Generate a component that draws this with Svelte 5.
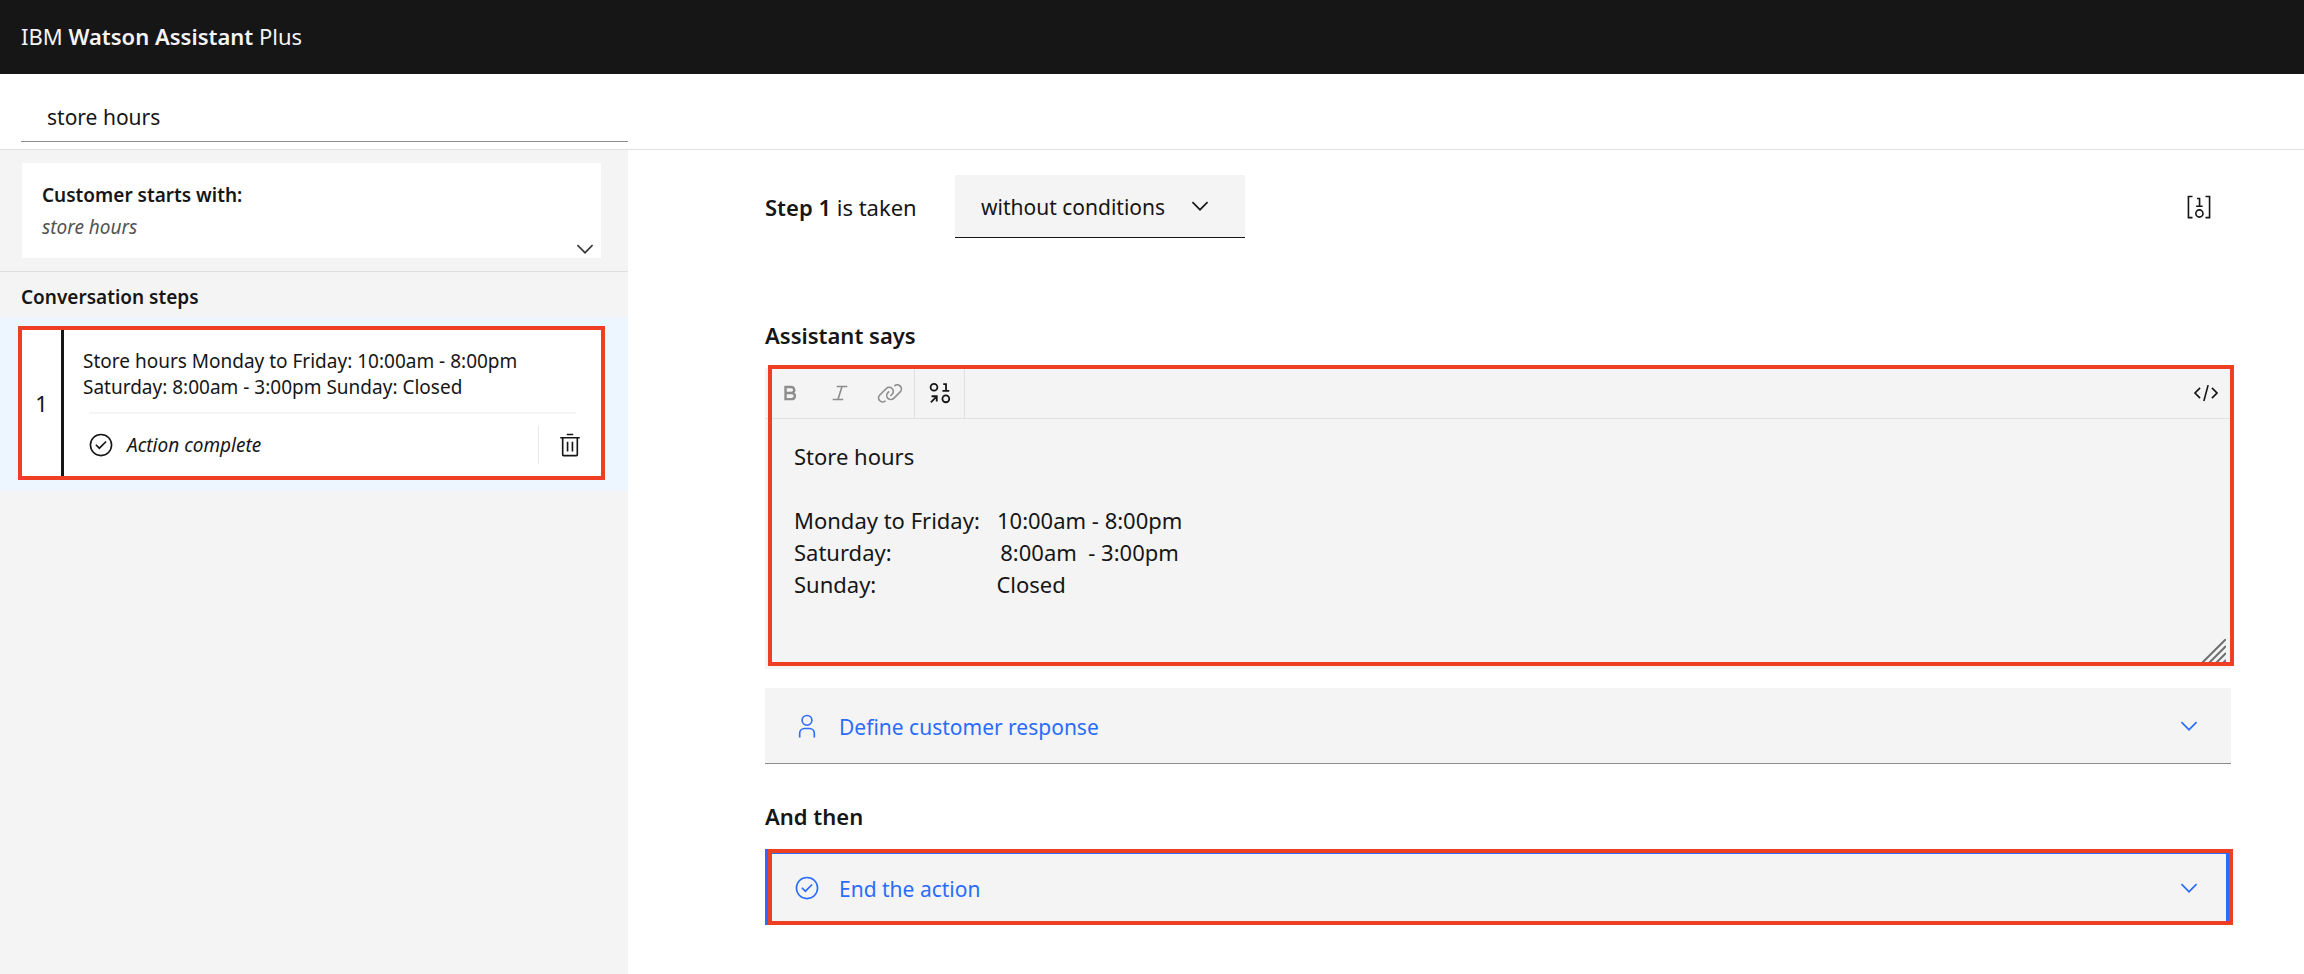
<script>
  const icons = {
    bold: 'M18.25 25H9V7h8.5a5.25 5.25 0 0 1 4 8.65A5.25 5.25 0 0 1 18.25 25ZM12 22h6.23a2.25 2.25 0 1 0 0-4.5H12Zm0-7.5h5.5a2.25 2.25 0 1 0 0-4.5H12Z',
    italic: 'M25 9V7H12v2h5.14l-4.37 14H7v2h13v-2h-5.14l4.37-14Z',
    link: 'M29.25 6.76a6 6 0 0 0-8.5 0l1.42 1.42a4 4 0 1 1 5.67 5.67l-8 8a4 4 0 1 1-5.67-5.66l1.41-1.42-1.41-1.42-1.42 1.42a6 6 0 0 0 0 8.5A6 6 0 0 0 17 25a6 6 0 0 0 4.27-1.76l8-8a6 6 0 0 0-.02-8.48ZM4.19 24.82a4 4 0 0 1 0-5.67l8-8a4 4 0 0 1 5.67 0A3.94 3.94 0 0 1 19 14a4 4 0 0 1-1.17 2.85L15.71 19l1.42 1.42 2.12-2.12a6 6 0 0 0-8.51-8.51l-8 8a6 6 0 0 0 0 8.51A6 6 0 0 0 7 28a6.07 6.07 0 0 0 4.28-1.76l-1.42-1.42a4 4 0 0 1-5.67 0Z',
    code: 'M31 16l-7 7-1.41-1.41L28.17 16l-5.58-5.59L24 9ZM1 16l7-7 1.41 1.41L3.83 16l5.58 5.59L8 23ZM12.42 25.48 17.64 6l1.93.52L14.35 26Z',
    trash: 'M12 12h2v12h-2ZM18 12h2v12h-2ZM4 6v2h2v20a2 2 0 0 0 2 2h16a2 2 0 0 0 2-2V8h2V6ZM8 28V8h16v20ZM12 2h8v2h-8Z',
    check: 'M14 21.41l-5-5L10.41 15 14 18.59 21.59 11 23 12.41ZM16 2a14 14 0 1 0 14 14A14 14 0 0 0 16 2Zm0 26a12 12 0 1 1 12-12 12 12 0 0 1-12 12Z',
    user: 'M16 4a5 5 0 1 1-5 5 5 5 0 0 1 5-5m0-2a7 7 0 1 0 7 7 7 7 0 0 0-7-7ZM26 30h-2v-5a5 5 0 0 0-5-5h-6a5 5 0 0 0-5 5v5H6v-5a7 7 0 0 1 7-7h6a7 7 0 0 1 7 7Z',
    chevron: 'M16 22 6 12l1.4-1.4 8.6 8.6 8.6-8.6L26 12Z'
  };

  const sp = (n) => '\u00a0'.repeat(n);

  let actionName = $state('store hours');
  let condition = $state('without conditions');
  let response = $state(
    [
      'Store hours',
      '',
      `Monday to Friday:${sp(3)}10:00am - 8:00pm`,
      `Saturday:${sp(19)}8:00am${sp(2)}- 3:00pm`,
      `Sunday:${sp(21)}Closed`
    ].join('\n')
  );
</script>

{#snippet icon(name)}
  <svg class="icon" viewBox="0 0 32 32" aria-hidden="true"><path fill-rule="evenodd" d={icons[name]} /></svg>
{/snippet}

<div class="app">
  <header class="brand">
    <span>IBM <strong>Watson Assistant</strong> Plus</span>
  </header>

  <div class="titlebar">
    <input class="name" type="text" aria-label="Action name" bind:value={actionName} />
  </div>

  <div class="body">
    <aside class="sidebar">
      <section class="starts">
        <div class="card">
          <h2>Customer starts with:</h2>
          <p>store hours</p>
          <button class="expand" aria-label="Show phrases">{@render icon('chevron')}</button>
        </div>
      </section>
      <h2 class="steps-title">Conversation steps</h2>
      <div class="selected">
        <article class="step">
          <div class="number">1</div>
          <div class="detail">
            <p class="summary">Store hours Monday to Friday: 10:00am - 8:00pm Saturday: 8:00am - 3:00pm Sunday: Closed</p>
            <div class="status">
              {@render icon('check')}
              <em>Action complete</em>
              <button class="delete" aria-label="Delete step">{@render icon('trash')}</button>
            </div>
          </div>
        </article>
      </div>
    </aside>

    <main class="main">
      <div class="condition">
        <label for="condition"><strong>Step 1</strong> is taken</label>
        <div class="select">
          <select id="condition" bind:value={condition}>
            <option>without conditions</option>
            <option>with conditions</option>
          </select>
          {@render icon('chevron')}
        </div>
        <button class="variables" aria-label="Set variable values">
          <svg class="icon" viewBox="0 0 32 32" aria-hidden="true">
            <g fill="none" stroke="currentColor" stroke-width="2">
              <path d="M8 3H3v26h5M24 3h5v26h-5" />
              <path d="M12.5 15h8M16.7 15V5.6h-3.2" />
              <circle cx="16.5" cy="24" r="4.4" />
            </g>
          </svg>
        </button>
      </div>

      <label class="heading says" for="response">Assistant says</label>
      <div class="editor">
        <div class="toolbar">
          <button class="tool" disabled aria-label="Bold">{@render icon('bold')}</button>
          <button class="tool" disabled aria-label="Italic">{@render icon('italic')}</button>
          <button class="tool" disabled aria-label="Link">{@render icon('link')}</button>
          <button class="tool insert" aria-label="Insert variable">
            <svg class="icon" viewBox="0 0 32 32" aria-hidden="true">
              <g fill="none" stroke="currentColor" stroke-width="2.2">
                <circle cx="8.6" cy="9" r="4.2" />
                <circle cx="23.2" cy="23.2" r="4.2" />
                <path d="M19 13.4h8.4M23.4 13.4V5h-3.4" />
                <path d="M4.8 27.4 12 20.2M5.6 20H12v6.6" />
              </g>
            </svg>
          </button>
          <button class="tool code" aria-label="Show source">{@render icon('code')}</button>
        </div>
        <textarea id="response" spellcheck="false" bind:value={response}></textarea>
        <svg class="grip" viewBox="0 0 24 24" aria-hidden="true">
          <path d="M0 24 24 0M7 24 24 7M14 24 24 14M21 24 24 21" />
        </svg>
        <div class="highlight"></div>
      </div>

      <button class="row">
        {@render icon('user')}
        <span class="row-label">Define customer response</span>
        {@render icon('chevron')}
      </button>

      <h2 class="heading then">And then</h2>
      <button class="row end">
        {@render icon('check')}
        <span class="row-label">End the action</span>
        {@render icon('chevron')}
        <span class="highlight"></span>
      </button>
    </main>
  </div>
</div>

<style>
  :global(body) {
    margin: 0;
  }

  .app {
    display: flex;
    flex-direction: column;
    min-height: 100vh;
    background: #fff;
    color: #161616;
    font: 21px/32px 'Noto Sans', sans-serif;
  }

  .app * {
    box-sizing: border-box;
  }

  h2,
  p {
    margin: 0;
  }

  strong,
  h2,
  .heading {
    font-weight: 600;
  }

  button,
  input,
  select,
  textarea {
    margin: 0;
    padding: 0;
    border: 0;
    border-radius: 0;
    background: none;
    color: inherit;
    font: inherit;
  }

  .icon {
    display: block;
    flex: none;
    width: 26px;
    height: 26px;
    fill: currentColor;
  }

  .brand {
    display: flex;
    align-items: center;
    height: 74px;
    padding: 0 21px 2px;
    background: #161616;
    color: #f4f4f4;
    font-size: 22px;
  }

  .titlebar {
    padding: 19px 0 7px 21px;
    border-bottom: 1px solid #e0e0e0;
  }

  .name {
    display: block;
    width: 607px;
    height: 49px;
    padding: 0 26px;
    border-bottom: 1px solid #8d8d8d;
  }

  .body {
    display: flex;
    flex: 1;
  }

  .sidebar {
    flex: none;
    width: 628px;
    background: #f4f4f4;
    font-size: 19px;
    line-height: 26px;
  }

  .sidebar h2 {
    font-size: 19px;
  }

  .starts {
    padding: 13px 27px 13px 22px;
    border-bottom: 1px solid #e0e0e0;
  }

  .card {
    position: relative;
    padding: 19px 20px 18px;
    background: #fff;
  }

  .card p {
    margin-top: 6px;
    color: #525252;
    font-style: italic;
  }

  .expand {
    position: absolute;
    right: 3px;
    bottom: -4px;
    color: #393939;
  }

  .steps-title {
    padding: 12px 21px 7px;
  }

  .selected {
    padding: 9px 23px 11px 18px;
    background: #edf5ff;
  }

  .step {
    display: flex;
    border: 4px solid #ee3e23;
    background: #fff;
  }

  .number {
    display: flex;
    align-items: center;
    justify-content: center;
    width: 42px;
    border-right: 3px solid #161616;
    font-size: 22px;
  }

  .detail {
    flex: 1;
  }

  .summary {
    padding: 18px 50px 12px 19px;
  }

  .status {
    display: flex;
    align-items: center;
    height: 64px;
    padding: 2px 0 0 24px;
    background: linear-gradient(#f4f4f4, #f4f4f4) 25px 0 / calc(100% - 50px) 2px no-repeat;
  }

  .status em {
    margin-left: 13px;
  }

  .delete {
    display: flex;
    align-items: center;
    justify-content: center;
    width: 63px;
    height: 38px;
    margin-left: auto;
    border-left: 1px solid #e8e8e8;
  }

  .main {
    flex: 1;
    padding: 25px 73px 49px 137px;
  }

  .condition {
    display: flex;
    align-items: center;
  }

  .condition label {
    min-width: 190px;
    font-size: 22px;
  }

  .select {
    position: relative;
    width: 290px;
  }

  .select select {
    display: block;
    width: 100%;
    height: 63px;
    padding: 2px 26px 0;
    border-bottom: 1px solid #161616;
    background: #f4f4f4;
    appearance: none;
  }

  .select .icon {
    position: absolute;
    top: 18px;
    right: 32px;
    pointer-events: none;
  }

  .variables {
    margin: 0 19px 0 auto;
  }

  .heading {
    display: block;
    font-size: 22px;
    line-height: 32px;
  }

  .says {
    margin: 81px 0 17px;
  }

  .then {
    margin: 36px 0 17px;
  }

  .editor {
    position: relative;
    background: #f4f4f4;
  }

  .toolbar {
    display: flex;
    height: 51px;
    border-bottom: 1px solid #e0e0e0;
  }

  .tool {
    display: flex;
    align-items: center;
    justify-content: center;
    width: 50px;
  }

  .tool:disabled {
    color: #8d8d8d;
  }

  .insert {
    box-shadow: -1px 0 #e0e0e0, inset -1px 0 #e0e0e0;
  }

  .code {
    margin-left: auto;
  }

  textarea {
    display: block;
    width: 100%;
    height: 250px;
    padding: 21px 29px;
    outline: 0;
    resize: none;
    font-size: 22px;
    line-height: 32px;
  }

  .grip {
    position: absolute;
    right: 5px;
    bottom: 6px;
    width: 24px;
    height: 24px;
    fill: none;
    stroke: #6f6f6f;
    stroke-width: 2;
  }

  .highlight {
    position: absolute;
    inset: -3px -3px 3px 3px;
    border: 4px solid #ee3e23;
    pointer-events: none;
  }

  .row {
    position: relative;
    display: flex;
    align-items: center;
    gap: 19px;
    width: 100%;
    height: 76px;
    margin-top: 19px;
    padding: 0 29px;
    border-bottom: 1px solid #8d8d8d;
    background: #f4f4f4;
    color: #2a6cfb;
    text-align: left;
  }

  .row-label {
    flex: 1;
    padding-top: 2px;
  }

  .end {
    margin-top: 0;
    padding: 0 24px;
    border: 5px solid #2a6cfb;
    border-bottom-width: 4px;
  }

  .end .highlight {
    inset: -5px -7px -4px -2px;
  }
</style>
